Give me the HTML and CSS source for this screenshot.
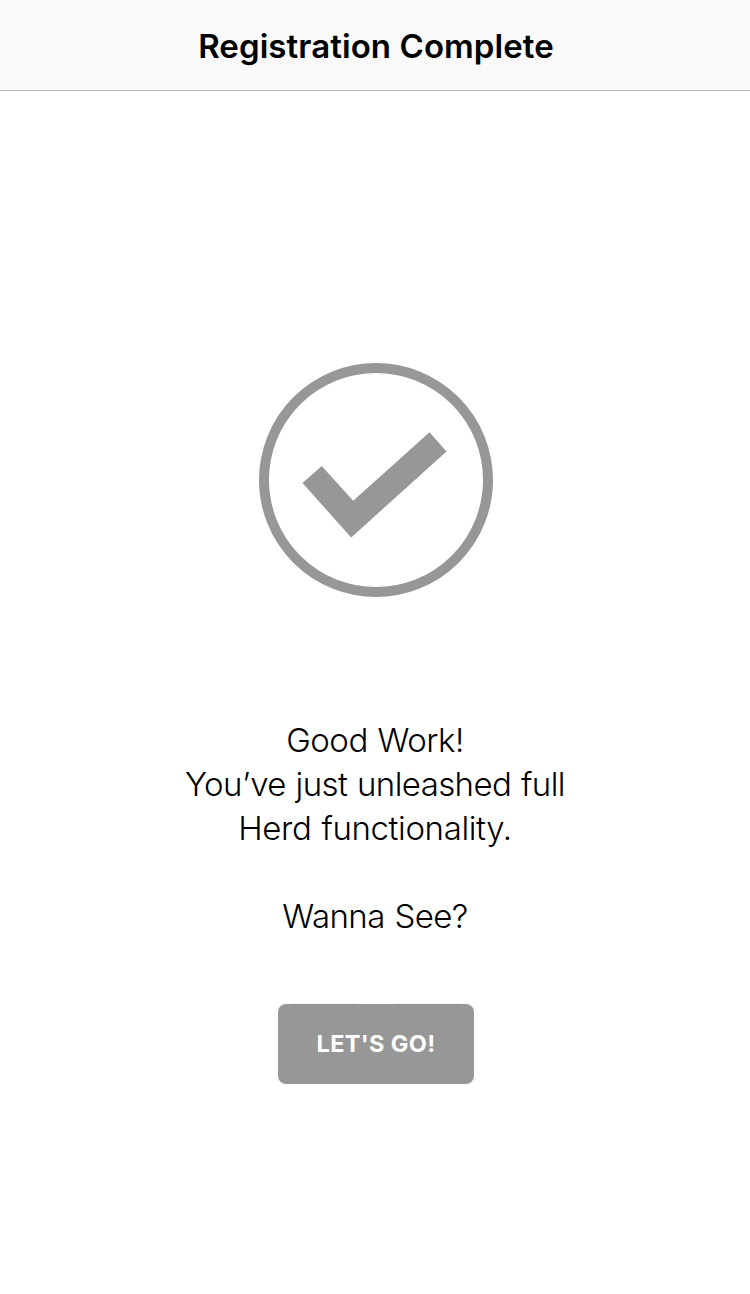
FILE: index.html
```html
<!DOCTYPE html>
<html lang="en">
<head>
<meta charset="utf-8">
<title>Registration Complete</title>
<link rel="stylesheet" href="styles.css">
</head>
<body>
<header class="navbar"><h1 class="title">Registration Complete</h1></header>
<main class="content">
<svg class="check" viewBox="0 0 234 234" aria-hidden="true">
<circle cx="117" cy="117" r="112" fill="none" stroke="#979797" stroke-width="10"/>
<path d="M43.500 120L62.700 103L94.200 137.700L170.500 69.300L187.500 88.500L92.200 174.500Z" fill="#979797"/>
</svg>
<div class="message">
<p class="line line-work">Good Work!</p>
<p class="line line-unleashed">You’ve just unleashed full</p>
<p class="line line-herd">Herd functionality.</p>
<p class="line line-question">Wanna See?</p>
</div>
<button class="go" type="button">LET'S GO!</button>
</main>
</body>
</html>
```
FILE: styles.css
```css
body { margin: 0; background: #fff; color: #000; font-family: Inter, "Liberation Sans", sans-serif; }
.navbar { box-sizing: border-box; height: 91px; background: #f9f9f9; border-bottom: 1px solid #b9b9b9; }
.title { margin: 0; padding-left: 2px; font-size: 33px; font-weight: 600; line-height: 92px; text-align: center; letter-spacing: 0.08px; }
.content { display: flex; flex-direction: column; align-items: center; padding-top: 272px; }
.check { display: block; width: 234px; height: 234px; margin-left: 2px; }
.message { margin-top: 121px; text-align: center; font-size: 33px; font-weight: 300; }
.line { margin: 0; line-height: 44px; white-space: nowrap; word-spacing: 1px; }
.line-work { letter-spacing: -0.5px; }
.line-unleashed { letter-spacing: -0.58px; }
.line-herd { letter-spacing: -0.37px; }
.line-question { margin-top: 44px; letter-spacing: -0.57px; }
.go {
  position: relative; width: 196px; height: 80px; margin: 66px 0 0 2px; padding: 0;
  border: 0; border-radius: 8px; background: #979797; color: #fff;
  font-family: inherit; font-size: 23.5px; font-weight: 700; line-height: 80px; letter-spacing: 0.35px;
}
/* Faint highlights along the top and bottom edges */
.go::before, .go::after {
  content: ""; position: absolute; left: 12px; right: 12px; height: 1px;
  background: linear-gradient(90deg, #eee 0 68px, transparent 68px 104px, #eee 104px);
}
.go::before { top: -1px; }
.go::after { bottom: -1px; }
```
